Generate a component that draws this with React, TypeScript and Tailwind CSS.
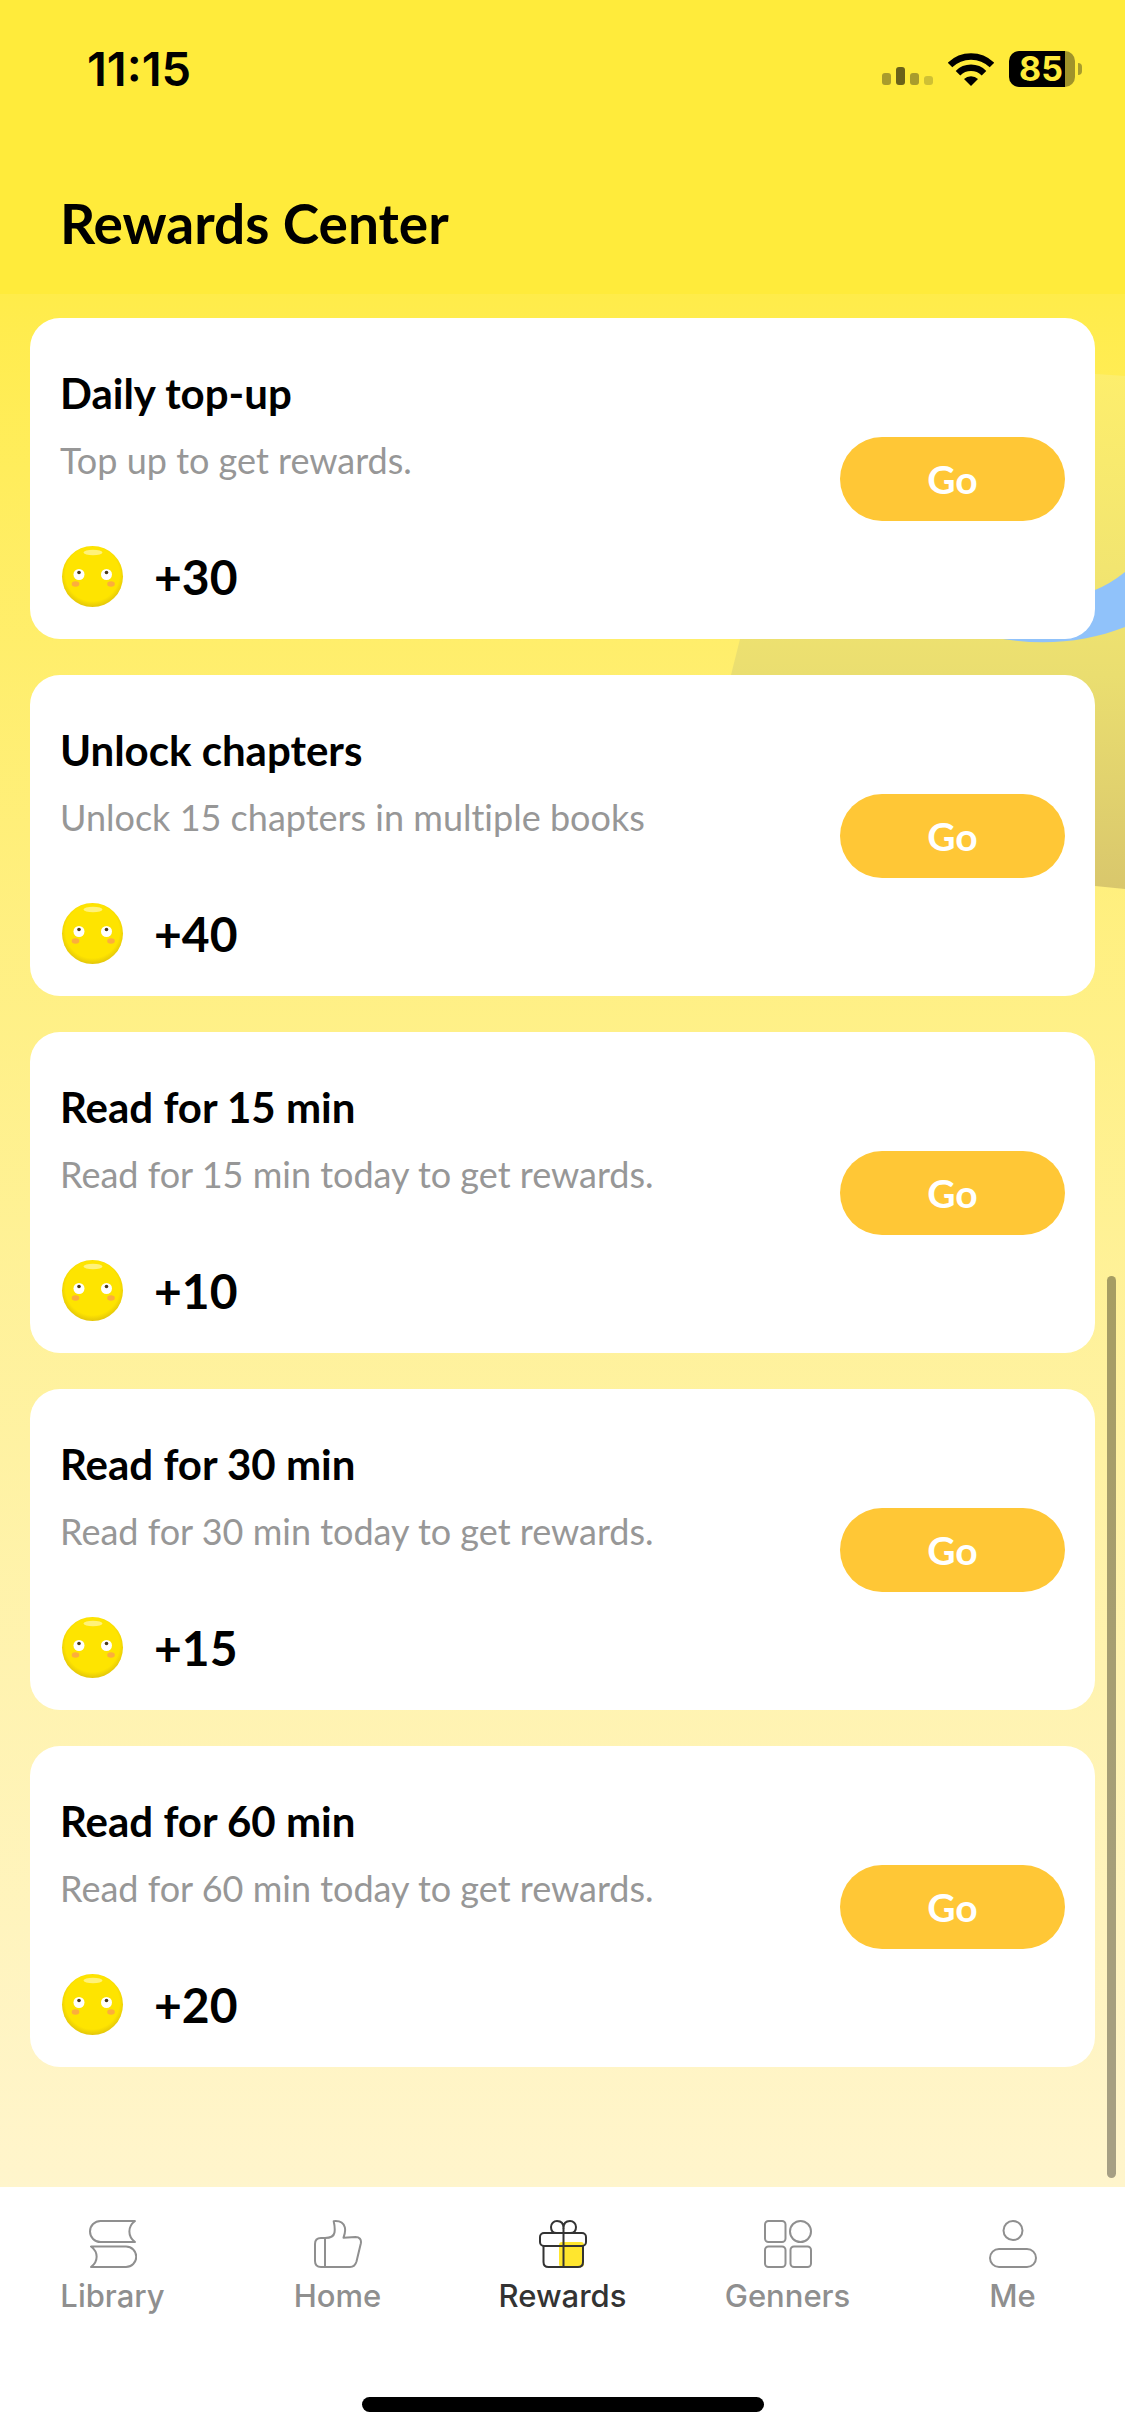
import { useState, type ReactNode } from 'react';

type Task = {
  id: string;
  title: string;
  description: string;
  reward: number;
};

type Tab = {
  id: string;
  label: string;
  icon: ReactNode;
};

const tasks: Task[] = [
  { id: 'top-up', title: 'Daily top-up', description: 'Top up to get rewards.', reward: 30 },
  { id: 'unlock', title: 'Unlock chapters', description: 'Unlock 15 chapters in multiple books', reward: 40 },
  { id: 'read-15', title: 'Read for 15 min', description: 'Read for 15 min today to get rewards.', reward: 10 },
  { id: 'read-30', title: 'Read for 30 min', description: 'Read for 30 min today to get rewards.', reward: 15 },
  { id: 'read-60', title: 'Read for 60 min', description: 'Read for 60 min today to get rewards.', reward: 20 },
];

const iconProps = {
  viewBox: '0 0 48 48',
  className: 'w-12 h-12',
  fill: 'none',
  stroke: 'currentColor',
  strokeWidth: 2,
  strokeLinejoin: 'round' as const,
  'aria-hidden': true,
};

const tabs: Tab[] = [
  {
    id: 'library',
    label: 'Library',
    icon: (
      <svg {...iconProps}>
        <path d="M46 1H11.5a10.5 10.5 0 0 0 0 21H46C38.5 16.5 38.5 6.5 46 1Z" />
        <path d="M2 26.5H37a10.25 10.25 0 0 1 0 20.5H2C9.5 41.5 9.5 32 2 26.5Z" />
      </svg>
    ),
  },
  {
    id: 'home',
    label: 'Home',
    icon: (
      <svg {...iconProps}>
        <path d="M11 18H7c-4 0-6 2-6 6v17c0 4 2 6 6 6h29c4 0 5.5-2 6.5-5.5l4.3-18c.8-4-1.3-6.5-5.3-6.5l-12 .7c1.5-4 2-7.7 1.3-10.5C29.5 3 25.5.6 19.7 1.2c1 4.3 1.3 8 .8 11.3-.6 3.5-3.500 5.5-9.500 5.5Z" />
        <path d="M11 18v29" />
      </svg>
    ),
  },
  {
    id: 'rewards',
    label: 'Rewards',
    icon: (
      <svg {...iconProps}>
        <rect x="20" y="22" width="25" height="25" rx="3" fill="#ffe62e" stroke="none" />
        <path d="M24.5 13H17.5C13.5 13 12 10 12 7c0-3.5 2.7-6 6-6 4 0 6.5 2.7 6.5 7 0-4.3 2.5-7 6.5-7 3.3 0 6 2.5 6 6 0 3-1.5 6-5.5 6Z" />
        <rect x="1" y="13" width="46" height="13" rx="4" />
        <path d="M4.5 26v16c0 3.5 1.5 5 5 5h29.5c3.5 0 5-1.5 5-5V26M24.5 8v39" />
      </svg>
    ),
  },
  {
    id: 'genners',
    label: 'Genners',
    icon: (
      <svg {...iconProps}>
        <rect x="1" y="1" width="20.5" height="21" rx="3.5" />
        <circle cx="36.5" cy="11.5" r="10.5" />
        <rect x="1" y="26.5" width="20.5" height="20.5" rx="3.5" />
        <rect x="26.5" y="26.5" width="20.5" height="20.5" rx="3.5" />
      </svg>
    ),
  },
  {
    id: 'me',
    label: 'Me',
    icon: (
      <svg {...iconProps}>
        <circle cx="24" cy="10.5" r="9.5" />
        <rect x="1" y="29" width="46" height="18" rx="9" />
      </svg>
    ),
  },
];

const StatusBar = () => (
  <div className="flex items-center justify-between h-[138px] pl-[87px] pr-[43px] font-['Inter',sans-serif]">
    <span className="text-[47px] leading-[54px] font-semibold text-black">11:15</span>
    <div className="flex items-center gap-[15px]">
      <svg viewBox="0 0 51 33" className="w-[51px] h-[33px]" aria-hidden="true">
        <rect x="0" y="20" width="9" height="12" rx="3" fill="#a99c2c" />
        <rect x="14" y="14" width="9" height="18" rx="3" fill="#6b6218" />
        <rect x="28" y="20" width="9" height="12" rx="3" fill="#a99c2c" />
        <rect x="42" y="23" width="9" height="9" rx="3" fill="#cfc034" />
      </svg>
      <svg viewBox="0 0 46 33" className="w-[46px] h-[33px]" fill="none" stroke="#000" aria-hidden="true">
        <path d="M2 12a30 30 0 0 1 42 0" strokeWidth="6.5" />
        <path d="M10 20.2a18.5 18.5 0 0 1 26 0" strokeWidth="6.5" />
        <path d="M23 33l-7-7a10 10 0 0 1 14 0Z" fill="#000" stroke="none" />
      </svg>
      <div className="flex items-center gap-[3px]">
        <div className="flex items-center justify-center w-[66px] h-9 pr-0.5 rounded-[10px] bg-linear-to-r from-black from-85% to-[#a0932a] to-85% text-[34px] leading-9 font-bold text-[#ffeb3b]">
          85
        </div>
        <div className="w-1 h-3 rounded-r-full bg-[#a99c2c]" />
      </div>
    </div>
  </div>
);

const Coin = () => (
  <svg viewBox="0 0 64 64" className="w-16 h-16 shrink-0" aria-hidden="true">
    <defs>
      <radialGradient id="coin" cx="0.5" cy="0.46" r="0.54">
        <stop offset="0.82" stopColor="#fee400" />
        <stop offset="1" stopColor="#e3c60a" />
      </radialGradient>
    </defs>
    <circle cx="32.5" cy="31.5" r="30.5" fill="url(#coin)" />
    <ellipse cx="33" cy="7.5" rx="9.5" ry="2.8" fill="#fff27a" />
    <circle cx="19" cy="29.5" r="5.5" fill="#fff" />
    <circle cx="46.5" cy="29.5" r="5.5" fill="#fff" />
    <circle cx="19" cy="27.5" r="1.8" fill="#4a3a1c" />
    <circle cx="46.5" cy="27.5" r="1.8" fill="#4a3a1c" />
    <ellipse cx="15.5" cy="39" rx="3.8" ry="2.8" fill="#fcae3c" />
    <ellipse cx="51" cy="39" rx="3.8" ry="2.8" fill="#fcae3c" />
  </svg>
);

// Decorative gift box art that peeks out from behind the cards
const Backdrop = () => (
  <svg viewBox="0 0 400 530" className="absolute top-[70px] right-0 w-[400px] h-[530px]" aria-hidden="true">
    <defs>
      <linearGradient id="box" x1="0" y1="0" x2="0" y2="1">
        <stop offset="0" stopColor="#feef6c" />
        <stop offset="0.4" stopColor="#f2e570" />
        <stop offset="0.6" stopColor="#eade70" />
        <stop offset="1" stopColor="#d9c76c" />
      </linearGradient>
    </defs>
    <path d="M80 -10L400 12V525L370 522L0 490L6 311L15 275Z" fill="url(#box)" />
    <path d="M240 265C290 283 350 283 400 263V208Q385 220 370 226L300 240Z" fill="#90c2fa" />
  </svg>
);

const TaskCard = ({ task }: { task: Task }) => (
  <li className="flex items-center justify-between bg-white rounded-[30px] pt-12 pb-[30px] px-[30px]">
    <div>
      <h2 className="text-[42px] leading-[54px] font-bold text-black">{task.title}</h2>
      <p className="mt-4 text-[36px] leading-12 text-[#979797] [font-variant-ligatures:none]">{task.description}</p>
      <div className="flex items-center gap-[30px] mt-[61px]">
        <Coin />
        <span className="text-[48px] leading-[60px] font-bold text-black">+{task.reward}</span>
      </div>
    </div>
    <button className="w-[225px] h-[84px] -mt-[18px] rounded-full bg-[#ffc736] text-[39px] leading-12 font-bold text-white">
      Go
    </button>
  </li>
);

const App = () => {
  const [activeTab, setActiveTab] = useState('rewards');

  return (
    <div className="flex flex-col min-h-screen bg-white font-['Lato',sans-serif]">
      <header className="bg-[#ffeb3b]">
        <StatusBar />
        <h1 className="pt-[52px] pb-[38px] px-[60px] text-[55px] leading-[66px] font-bold text-black">
          Rewards Center
        </h1>
      </header>

      <main className="relative flex-1 overflow-hidden bg-linear-to-b from-[#ffec4a] to-[#fff5cc] pt-6 pb-[120px] px-[30px]">
        <Backdrop />
        <ul className="relative flex flex-col gap-9">
          {tasks.map((t) => <TaskCard key={t.id} task={t} />)}
        </ul>
        <div className="absolute right-[9px] bottom-[9px] w-[9px] h-[902px] rounded-full bg-black/35" />
      </main>

      <nav className="flex flex-col pt-[33px] pb-6 bg-white font-['Inter',sans-serif]">
        <div className="grid grid-cols-5">
          {tabs.map((tab) => (
            <button
              key={tab.id}
              onClick={() => setActiveTab(tab.id)}
              className={`flex flex-col items-center gap-2.5 text-[31px] leading-9 font-medium ${
                tab.id === activeTab ? 'text-[#333333]' : 'text-[#8f8f8f]'
              }`}
            >
              {tab.icon}
              {tab.label}
            </button>
          ))}
        </div>
        <div className="w-[402px] h-[15px] mt-[83px] mx-auto rounded-full bg-black" />
      </nav>
    </div>
  );
};

export default App;
